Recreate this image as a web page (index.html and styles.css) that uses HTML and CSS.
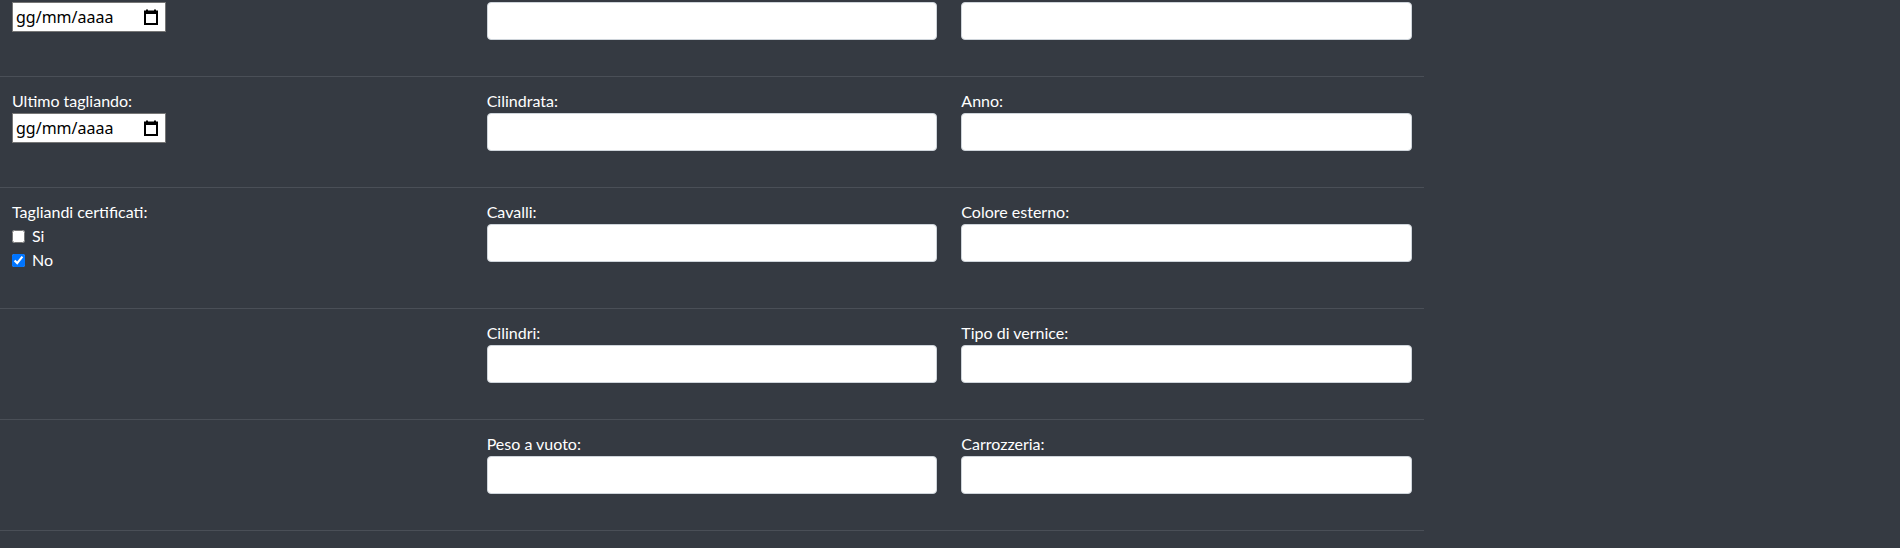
FILE: index.html
```html
<!DOCTYPE html>
<html lang="it">
<head>
<meta charset="utf-8">
<title>Scheda veicolo</title>
<link rel="stylesheet" href="styles.css">
</head>
<body>
<form class="sheet">
  <div class="row row-first">
    <div class="col">
      <div class="date-field"><span>gg/mm/aaaa</span><svg class="cal" viewBox="0 0 14 16" width="14" height="16"><path d="M3 0.5v2.5M11 0.5v2.5" stroke="#000" stroke-width="2"/><rect x="1" y="2.5" width="12" height="12.5" fill="none" stroke="#000" stroke-width="2"/><rect x="0" y="2" width="14" height="3" fill="#000"/></svg></div>
    </div>
    <div class="col">
      <input class="ctl" type="text">
    </div>
    <div class="col">
      <input class="ctl" type="text">
    </div>
  </div>
  <div class="row">
    <div class="col">
      <label class="lbl">Ultimo tagliando:</label>
      <div class="date-field"><span>gg/mm/aaaa</span><svg class="cal" viewBox="0 0 14 16" width="14" height="16"><path d="M3 0.5v2.5M11 0.5v2.5" stroke="#000" stroke-width="2"/><rect x="1" y="2.5" width="12" height="12.5" fill="none" stroke="#000" stroke-width="2"/><rect x="0" y="2" width="14" height="3" fill="#000"/></svg></div>
    </div>
    <div class="col">
      <label class="lbl">Cilindrata:</label>
      <input class="ctl" type="text">
    </div>
    <div class="col">
      <label class="lbl">Anno:</label>
      <input class="ctl" type="text">
    </div>
  </div>
  <div class="row">
    <div class="col">
      <label class="lbl">Tagliandi certificati:</label>
      <label class="chk"><input type="checkbox">Si</label>
      <label class="chk"><input type="checkbox" checked>No</label>
    </div>
    <div class="col">
      <label class="lbl">Cavalli:</label>
      <input class="ctl" type="text">
    </div>
    <div class="col">
      <label class="lbl">Colore esterno:</label>
      <input class="ctl" type="text">
    </div>
  </div>
  <div class="row">
    <div class="col"></div>
    <div class="col">
      <label class="lbl">Cilindri:</label>
      <input class="ctl" type="text">
    </div>
    <div class="col">
      <label class="lbl">Tipo di vernice:</label>
      <input class="ctl" type="text">
    </div>
  </div>
  <div class="row">
    <div class="col"></div>
    <div class="col">
      <label class="lbl">Peso a vuoto:</label>
      <input class="ctl" type="text">
    </div>
    <div class="col">
      <label class="lbl">Carrozzeria:</label>
      <input class="ctl" type="text">
    </div>
  </div>
</form>
</body>
</html>
```

FILE: styles.css
```css
html, body {
  margin: 0;
  padding: 0;
  background: #353a42;
}
body {
  font-family: Lato, "Noto Sans", sans-serif;
  font-size: 16px;
  line-height: 24px;
  color: #ffffff;
  overflow: hidden;
  height: 548px;
}
.sheet {
  width: 1424px;
  margin-top: -10px;
}
.row {
  display: grid;
  grid-template-columns: 1fr 1fr 1fr;
  border-bottom: 1px solid #4a4f57;
}
.col {
  padding: 12px 12px 36px;
  display: flex;
  flex-direction: column;
  align-items: flex-start;
  min-width: 0;
}
.lbl {
  display: block;
  height: 24px;
}
.ctl {
  box-sizing: border-box;
  width: 100%;
  height: 38px;
  margin: 0;
  padding: 6px 12px;
  border: 1px solid #ced4da;
  border-radius: 4px;
  background: #fff;
  font: inherit;
  color: #495057;
}
.date-field {
  box-sizing: border-box;
  width: 154px;
  height: 30px;
  border: 1px solid #767676;
  background: #fff;
  color: #000;
  display: flex;
  align-items: center;
  justify-content: space-between;
  padding: 0 7px 0 3px;
  font-family: "Noto Sans", sans-serif;
}
.date-field span {
  line-height: 20px;
}
.cal {
  display: block;
}
.chk {
  display: flex;
  align-items: center;
  height: 24px;
}
.chk input {
  width: 13px;
  height: 13px;
  margin: 0 7px 0 0;
}
```
